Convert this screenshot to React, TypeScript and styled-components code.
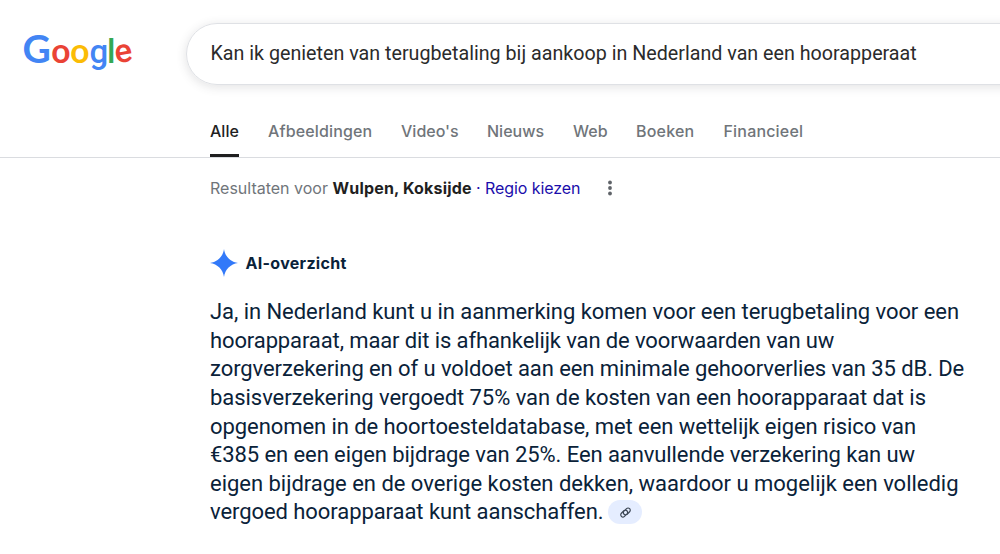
import styled, { createGlobalStyle } from "styled-components";

// 검색 탭
const tabs = [
    { label: "Alle", width: 29, spacing: 0 },
    { label: "Afbeeldingen", width: 104, spacing: 0.14 },
    { label: "Video's", width: 57, spacing: 0 },
    { label: "Nieuws", width: 57, spacing: 0 },
    { label: "Web", width: 34, spacing: 0 },
    { label: "Boeken", width: 58.5, spacing: 0.2 },
    { label: "Financieel", width: 79, spacing: 0.18 },
]

// AI 요약 본문
const overview = [
    { text: "Ja, in Nederland kunt u in aanmerking komen voor een terugbetaling voor een", spacing: -0.053 },
    { text: "hoorapparaat, maar dit is afhankelijk van de voorwaarden van uw", spacing: -0.115 },
    { text: "zorgverzekering en of u voldoet aan een minimale gehoorverlies van 35 dB. De", spacing: -0.08 },
    { text: "basisverzekering vergoedt 75% van de kosten van een hoorapparaat dat is", spacing: -0.05 },
    { text: "opgenomen in de hoortoesteldatabase, met een wettelijk eigen risico van", spacing: -0.07 },
    { text: "€385 en een eigen bijdrage van 25%. Een aanvullende verzekering kan uw", spacing: -0.086 },
    { text: "eigen bijdrage en de overige kosten dekken, waardoor u mogelijk een volledig", spacing: -0.02 },
    { text: "vergoed hoorapparaat kunt aanschaffen.", spacing: -0.07 },
]

export default function App() {
    return (
        <Page>
            <GlobalStyle />
            <Header>
                <GoogleLogo />
                <SearchBox>Kan ik genieten van terugbetaling bij aankoop in Nederland van een hoorapperaat</SearchBox>
            </Header>
            <Tabs>
                {tabs.map((tab, index) => (
                    <Tab key={tab.label} $width={tab.width} $spacing={tab.spacing} $active={index === 0}>{tab.label}</Tab>
                ))}
            </Tabs>
            <Region>
                <RegionLabel>Resultaten voor</RegionLabel>
                <Place>Wulpen, Koksijde</Place>
                <Dot>·</Dot>
                <RegionLink>Regio kiezen</RegionLink>
                <MoreIcon viewBox="0 0 6 16">
                    <circle cx="3" cy="2.5" r="1.9" />
                    <circle cx="3" cy="8" r="1.9" />
                    <circle cx="3" cy="13.5" r="1.9" />
                </MoreIcon>
            </Region>
            <Overview>
                <OverviewHeader>
                    <Spark viewBox="0 0 28 28">
                        <path d="M14 0C15 7.5 20.5 13 28 14C20.5 15 15 20.5 14 28C13 20.5 7.5 15 0 14C7.5 13 13 7.5 14 0Z" />
                    </Spark>
                    <OverviewTitle>AI-overzicht</OverviewTitle>
                </OverviewHeader>
                {overview.map((line, index) => (
                    <Line key={line.text}>
                        <LineText $spacing={line.spacing}>{line.text}</LineText>
                        {index === overview.length - 1 && (
                            <SourceBtn>
                                <LinkIcon viewBox="0 0 24 24">
                                    <path d="M10.4 15.8l-1.8 1.8a4 4 0 0 1-5.7-5.7l4.6-4.6a4 4 0 0 1 5.7 0a4 4 0 0 1 .4 5.2" transform="translate(1.5 1.5)" />
                                    <path d="M13.6 8.2l1.8-1.8a4 4 0 0 1 5.7 5.7l-4.6 4.6a4 4 0 0 1-5.7 0a4 4 0 0 1-.4-5.2" transform="translate(-1.5 -1.5)" />
                                </LinkIcon>
                            </SourceBtn>
                        )}
                    </Line>
                ))}
            </Overview>
        </Page>
    )
}

function GoogleLogo() {
    return (
        <Logo viewBox="0 0 112 44">
            <LogoText y="30.7">
                <LogoCapital x="-1.6" fill="#4285f4">G</LogoCapital>
                <LogoRound x="27.2" fill="#ea4335">o</LogoRound>
                <LogoRound x="46.3" fill="#fbbc05">o</LogoRound>
                <tspan x="65.6" fill="#4285f4">g</tspan>
                <tspan x="83" fill="#34a853">l</tspan>
            </LogoText>
            <LogoText x="92.2" y="31.5" fill="#ea4335" rotate="-10">e</LogoText>
        </Logo>
    )
}

// styled components
const GlobalStyle = createGlobalStyle`
    * {
        box-sizing: border-box;
    }
    body {
        margin: 0;
        background: #fff;
        overflow: hidden;
    }
`

const Page = styled.div`
    width: 100%;
    height: 554px;
    overflow: hidden;
    font-family: Inter, sans-serif;
`

const Header = styled.header`
    display: flex;
    align-items: flex-start;
    height: 109px;
    padding: 23px 0 0 24px;
    overflow: hidden;
`

const Logo = styled.svg`
    flex: none;
    width: 112px;
    height: 44px;
    margin: 9px 50px 0 0;
    overflow: visible;
`

const LogoText = styled.text`
    font-family: Roboto, sans-serif;
    font-size: 33px;
    font-weight: 500;
`

const LogoCapital = styled.tspan`
    font-family: Lato, sans-serif;
    font-size: 39px;
    font-weight: 700;
`

const LogoRound = styled.tspan`
    font-family: Lato, sans-serif;
    font-size: 33.5px;
    font-weight: 700;
`

const SearchBox = styled.div`
    flex: none;
    width: 860px;
    height: 62px;
    padding-left: 23.5px;
    border: 1px solid #dfe1e5;
    border-radius: 31px;
    box-shadow: 0 2px 10px 1px rgba(64, 60, 67, 0.13);
    color: #2b2b2b;
    font-family: Roboto, sans-serif;
    font-size: 19.7px;
    line-height: 60px;
    white-space: nowrap;
`

const Tabs = styled.nav`
    display: flex;
    gap: 29px;
    height: 49px;
    padding-left: 210px;
    border-bottom: 1px solid #dadce0;
`

const Tab = styled.a<{ $width: number; $spacing: number; $active: boolean }>`
    width: ${({ $width }) => $width}px;
    height: 48px;
    border-bottom: ${({ $active }) => $active ? "3px solid #1f1f1f" : "none"};
    color: ${({ $active }) => $active ? "#1f1f1f" : "#70757a"};
    font-size: 16px;
    font-weight: 500;
    letter-spacing: ${({ $spacing }) => $spacing}px;
    line-height: 45px;
    white-space: nowrap;
`

const Region = styled.div`
    display: flex;
    align-items: center;
    height: 60px;
    padding-left: 210px;
    font-size: 16px;
    white-space: nowrap;
`

const RegionLabel = styled.span`
    width: 122.5px;
    color: #70757a;
`

const Place = styled.strong`
    width: 143.5px;
    color: #1f1f1f;
    font-weight: 700;
    letter-spacing: 0.18px;
`

const Dot = styled.span`
    width: 9px;
    color: #1a0dab;
`

const RegionLink = styled.a`
    width: 122px;
    color: #1a0dab;
    letter-spacing: -0.08px;
`

const MoreIcon = styled.svg`
    width: 6px;
    height: 16px;
    fill: #5f6368;
`

const Overview = styled.section`
    padding: 31px 0 0 210px;
    color: #0a2239;
`

const OverviewHeader = styled.div`
    display: flex;
    align-items: center;
    gap: 7.5px;
    height: 28px;
    margin-bottom: 21px;
`

const Spark = styled.svg`
    width: 28px;
    height: 28px;
    fill: #3279f9;
`

const OverviewTitle = styled.h2`
    margin: 0;
    font-size: 16px;
    font-weight: 700;
    letter-spacing: 0.3px;
`

const Line = styled.div`
    display: flex;
    align-items: center;
    height: 28.6px;
    font-family: Roboto, sans-serif;
    font-size: 22px;
    line-height: 28px;
    white-space: nowrap;
`

const LineText = styled.span<{ $spacing: number }>`
    letter-spacing: ${({ $spacing }) => $spacing}px;
`

const SourceBtn = styled.button`
    display: flex;
    align-items: center;
    justify-content: center;
    width: 34px;
    height: 24px;
    margin-left: 5px;
    padding: 0;
    border: 0;
    border-radius: 12px;
    background: #e5edff;
`

const LinkIcon = styled.svg`
    width: 13px;
    height: 13px;
    fill: none;
    stroke: #3c4654;
    stroke-width: 2.2;
    stroke-linecap: round;
`
